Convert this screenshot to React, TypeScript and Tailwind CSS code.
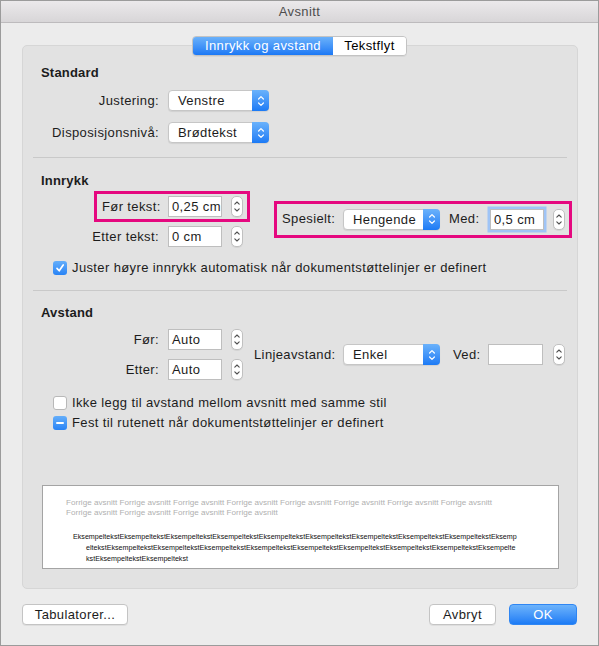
import React from "react";

const PINK = "border-[3px] border-[#e5087f]";

const Stepper: React.FC<{ className?: string }> = ({ className = "" }) => (
  <div
    className={`flex h-[21px] w-[12px] shrink-0 items-center justify-center rounded-[5px] border border-[#c0c0c0] bg-white shadow-[0_1px_0_rgba(0,0,0,0.06)] ${className}`}
  >
    <svg width="10" height="19" viewBox="0 0 10 19" fill="none" stroke="#4f4f4f" strokeWidth="1.1" strokeLinecap="round" strokeLinejoin="round">
      <path d="M2.8 7.2 L5 5 L7.2 7.2" />
      <path d="M2.8 11.8 L5 14 L7.2 11.8" />
    </svg>
  </div>
);

const PopUp: React.FC<{ value: string; className?: string }> = ({ value, className = "" }) => (
  <div
    className={`flex h-[21px] shrink-0 items-stretch rounded-[4px] border border-[#c6c6c6] bg-white shadow-[0_1px_1px_rgba(0,0,0,0.08)] ${className}`}
  >
    <span className="flex-1 pl-[9px] leading-[19px]">{value}</span>
    <span className="-my-px -mr-px flex w-[17px] items-center justify-center rounded-r-[4px] bg-linear-to-b from-[#6ab2fb] to-[#1b7af5]">
      <svg width="10" height="16" viewBox="0 0 10 16" fill="none" stroke="#ffffff" strokeWidth="1.2" strokeLinecap="round" strokeLinejoin="round">
        <path d="M2.6 6 L5 3.6 L7.4 6" />
        <path d="M2.6 10 L5 12.4 L7.4 10" />
      </svg>
    </span>
  </div>
);

const Field: React.FC<{ value?: string; className?: string }> = ({ value = "", className = "" }) => (
  <div className={`h-[21px] shrink-0 border border-[#bebebe] bg-white pl-[3px] leading-[19px] ${className}`}>{value}</div>
);

const Check: React.FC<{ state: "on" | "off" | "mixed"; label: string }> = ({ state, label }) => (
  <div className="ml-[30px] flex h-[16px] items-center">
    {state === "off" ? (
      <span className="h-[14px] w-[14px] rounded-[3px] border border-[#b8b8b8] bg-white" />
    ) : (
      <span className="flex h-[14px] w-[14px] items-center justify-center rounded-[3px] bg-linear-to-b from-[#64aefa] to-[#2783f5]">
        {state === "on" ? (
          <svg width="10" height="10" viewBox="0 0 10 10" fill="none" stroke="#ffffff" strokeWidth="1.7" strokeLinecap="round" strokeLinejoin="round">
            <path d="M2 5.4 L4.2 7.8 L8.2 2" />
          </svg>
        ) : (
          <span className="h-[2px] w-[8px] rounded-full bg-white" />
        )}
      </span>
    )}
    <span className="ml-[5px] whitespace-nowrap">{label}</span>
  </div>
);

const Row: React.FC<{ label: string; children: React.ReactNode; className?: string }> = ({ label, children, className = "" }) => (
  <div className={`flex items-center ${className}`}>
    <span className="w-[136px] shrink-0 whitespace-nowrap text-right">{label}</span>
    {children}
  </div>
);

const Divider: React.FC<{ className?: string }> = ({ className = "" }) => (
  <div className={`ml-[10px] mr-[10px] h-px bg-[#c9c9c9] ${className}`} />
);

const sample = "Eksempeltekst";

export default function App() {
  return (
    <div className="h-[646px] w-[599px] border border-[#9b9b9b] bg-[#ececec] font-['Liberation_Sans',Arial,sans-serif] text-[13px] tracking-[0.38px] text-[#1c1c1c]">
      {/* title bar */}
      <div className="flex h-[22px] items-center justify-center border-b border-[#bdbbbd] bg-linear-to-b from-[#ebe9eb] to-[#d8d6d8] text-[#4d4d4d]">
        Avsnitt
      </div>

      <div className="px-[21px] pt-[13px]">
        {/* tabs */}
        <div className="relative z-10 flex justify-center">
          <div className="flex h-[20px] overflow-hidden rounded-[4px] border border-[#c3c3c3] shadow-[0_1px_0_rgba(0,0,0,0.05)]">
            <div className="w-[140px] bg-linear-to-b from-[#6ab1fa] to-[#1a78f5] text-center leading-[18px] text-white">
              Innrykk og avstand
            </div>
            <div className="w-[73px] bg-white text-center leading-[18px] text-black">Tekstflyt</div>
          </div>
        </div>

        {/* group box */}
        <div className="-mt-[11px] h-[544px] w-[556px] rounded-[5px] border border-[#d6d6d6] bg-[#e2e2e2]">
          <div className="pl-[18px] pt-[19px] font-bold leading-[16px] tracking-[0.2px]">Standard</div>
          <Row label="Justering:" className="mt-[9px]">
            <PopUp value="Venstre" className="ml-[9px] w-[101px]" />
          </Row>
          <Row label="Disposisjonsnivå:" className="mt-[11px]">
            <PopUp value="Brødtekst" className="ml-[9px] w-[101px]" />
          </Row>

          <Divider className="mt-[14px]" />

          <div className="mt-[15px] pl-[18px] font-bold leading-[16px] tracking-[0.2px]">Innrykk</div>
          <div className="mt-[2px] flex items-center">
            <div className="w-[228px] shrink-0">
              <div className={`ml-[71px] flex h-[31px] w-[156px] items-center pl-[5px] ${PINK}`}>
                <span className="w-[57px] shrink-0 whitespace-nowrap text-right">Før tekst:</span>
                <Field value="0,25 cm" className="ml-[9px] w-[54px]" />
                <Stepper className="ml-[9px]" />
              </div>
              <Row label="Etter tekst:" className="mt-[4px]">
                <Field value="0 cm" className="ml-[9px] w-[54px]" />
                <Stepper className="ml-[9px]" />
              </Row>
            </div>
            <div className={`ml-[23px] flex h-[37px] w-[298px] items-center pl-[5px] ${PINK}`}>
              <span className="w-[52px] shrink-0 whitespace-nowrap">Spesielt:</span>
              <PopUp value="Hengende" className="ml-[9px] w-[97px]" />
              <span className="ml-[9px] w-[30px] shrink-0">Med:</span>
              <Field
                value="0,5 cm"
                className="ml-[11px] w-[54px] border-[#79a8ea] shadow-[0_0_0_2.5px_#9fc4f6]"
              />
              <Stepper className="ml-[9px]" />
            </div>
          </div>
          <div className="mt-[13px]">
            <Check state="on" label="Juster høyre innrykk automatisk når dokumentstøttelinjer er definert" />
          </div>

          <Divider className="mt-[14px]" />

          <div className="mt-[14px] pl-[18px] font-bold leading-[16px] tracking-[0.2px]">Avstand</div>
          <div className="mt-[8px] flex items-center">
            <div className="w-[231px] shrink-0">
              <Row label="Før:">
                <Field value="Auto" className="ml-[9px] w-[54px]" />
                <Stepper className="ml-[9px]" />
              </Row>
              <Row label="Etter:" className="mt-[9px]">
                <Field value="Auto" className="ml-[9px] w-[54px]" />
                <Stepper className="ml-[9px]" />
              </Row>
            </div>
            <span className="w-[80px] shrink-0 whitespace-nowrap">Linjeavstand:</span>
            <PopUp value="Enkel" className="ml-[9px] w-[97px]" />
            <span className="ml-[13px] w-[28px] shrink-0">Ved:</span>
            <Field className="ml-[7px] w-[55px]" />
            <Stepper className="ml-[10px]" />
          </div>
          <div className="mt-[15px]">
            <Check state="off" label="Ikke legg til avstand mellom avsnitt med samme stil" />
          </div>
          <div className="mt-[4px]">
            <Check state="mixed" label="Fest til rutenett når dokumentstøttelinjer er definert" />
          </div>

          {/* preview */}
          <div className="ml-[19px] mt-[54px] h-[84px] w-[517px] overflow-hidden border border-[#a4a4a4] bg-white tracking-normal">
            <div className="pl-[23px] pt-[12px] text-[8.1px] leading-[10px] text-[#b0b0b0]">
              <div className="whitespace-nowrap">{Array(8).fill("Forrige avsnitt").join(" ")}</div>
              <div className="whitespace-nowrap">{Array(4).fill("Forrige avsnitt").join(" ")}</div>
            </div>
            <div className="mt-[14px] pl-[30px] text-[7.15px] leading-[11px] text-[#111111]">
              <div className="whitespace-nowrap">{sample.repeat(9)}Eksemp</div>
              <div className="whitespace-nowrap pl-[13px]">elteks{"t" + sample.repeat(8)}Eksempelte</div>
              <div className="whitespace-nowrap pl-[13px]">kst{sample.repeat(2)}</div>
            </div>
          </div>
        </div>

        {/* buttons */}
        <div className="mt-[15px] flex items-center">
          <button className="h-[21px] w-[106px] rounded-[4px] border border-[#c4c4c4] bg-white leading-[19px] shadow-[0_1px_0_rgba(0,0,0,0.06)]">
            Tabulatorer...
          </button>
          <button className="ml-auto h-[21px] w-[67px] rounded-[4px] border border-[#c4c4c4] bg-white leading-[19px] shadow-[0_1px_0_rgba(0,0,0,0.06)]">
            Avbryt
          </button>
          <button className="ml-[13px] h-[21px] w-[68px] rounded-[4px] border border-[#2f86f3] bg-linear-to-b from-[#6cb3fb] to-[#1b7bf5] leading-[19px] text-white">
            OK
          </button>
        </div>
      </div>
    </div>
  );
}
